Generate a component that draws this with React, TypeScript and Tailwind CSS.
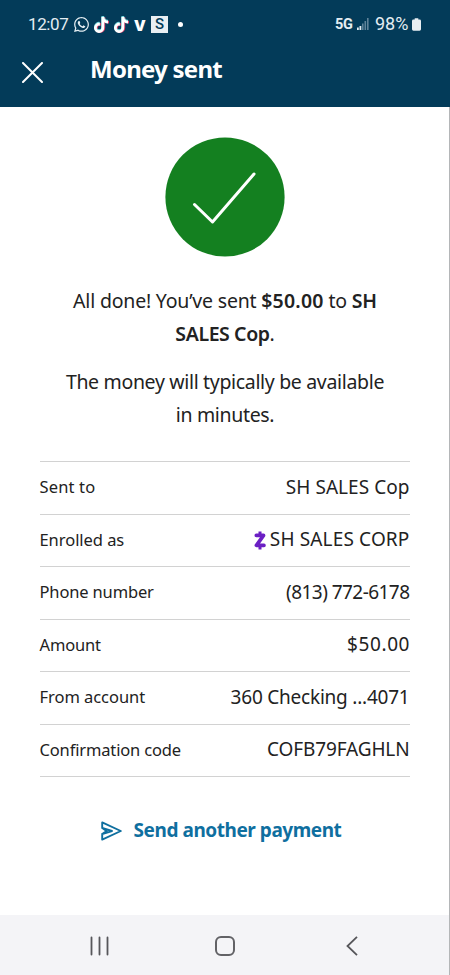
import React from "react";
import { FaWhatsapp } from "react-icons/fa";
import { FaTiktok } from "react-icons/fa6";

interface DetailRow {
  label: string;
  value: string;
  labelClass: string;
  valueClass: string;
  zelle?: boolean;
}

const details: DetailRow[] = [
  {
    label: "Sent to",
    value: "SH SALES Cop",
    labelClass: "tracking-[0.15px]",
    valueClass: "tracking-[0.05px]",
  },
  {
    label: "Enrolled as",
    value: "SH SALES CORP",
    labelClass: "tracking-[-0.05px]",
    valueClass: "tracking-[0.15px]",
    zelle: true,
  },
  {
    label: "Phone number",
    value: "(813) 772-6178",
    labelClass: "tracking-[-0.15px]",
    valueClass: "tracking-[-0.55px]",
  },
  {
    label: "Amount",
    value: "$50.00",
    labelClass: "tracking-[-0.15px]",
    valueClass: "tracking-[0.6px] -mr-[0.6px]",
  },
  {
    label: "From account",
    value: "360 Checking ...4071",
    labelClass: "tracking-[-0.05px]",
    valueClass: "tracking-[-0.22px]",
  },
  {
    label: "Confirmation code",
    value: "COFB79FAGHLN",
    labelClass: "tracking-[-0.15px]",
    valueClass: "tracking-[-0.12px]",
  },
];

const TikTokIcon: React.FC = () => (
  <span className="relative block h-4 w-[14px]">
    <FaTiktok className="absolute top-[0.7px] left-[0.7px] h-4 w-[14px] text-[#e8426b]" />
    <FaTiktok className="absolute top-[-0.5px] left-[-0.5px] h-4 w-[14px] text-[#6fd6dc]" />
    <FaTiktok className="absolute top-0 left-0 h-4 w-[14px] text-white" />
  </span>
);

const ZelleIcon: React.FC = () => (
  <svg className="h-[19px] w-3" viewBox="0 0 12 19" fill="none">
    <path d="M6 .6v3M6 15.4v3" stroke="#6b1fc4" strokeWidth="3" />
    <path
      d="M2.3 4.4h7.300L2.400 14.400h7.600"
      stroke="#6b1fc4"
      strokeWidth="3.6"
      strokeLinejoin="round"
      strokeLinecap="round"
    />
  </svg>
);

const StatusBar: React.FC = () => (
  <div className="flex h-12 items-center justify-between pr-[28px] pl-7 text-[#e4edf2]">
    <div className="flex items-center pt-px">
      <span className="w-[45px] font-['Roboto'] text-[17px] tracking-[-0.4px]">
        12:07
      </span>
      <FaWhatsapp className="mr-[4px] h-[17px] w-[17px]" />
      <TikTokIcon />
      <span className="w-[6px]" />
      <TikTokIcon />
      <span className="ml-[6px] w-3 font-['Inter'] text-[19px] leading-5 font-extrabold text-white">
        v
      </span>
      <span className="ml-[5px] flex h-[17px] w-[17px] items-center justify-center bg-[#e9eff3] font-['Roboto'] text-[15px] font-medium text-[#033b59]">
        S
      </span>
      <span className="ml-[10px] h-[5px] w-[5px] rounded-full bg-white" />
    </div>
    <div className="flex items-center">
      <span className="w-[19px] pt-[2px] font-['Roboto'] text-[14.5px] font-bold tracking-[-0.3px]">
        5G
      </span>
      <svg className="ml-[3px] h-3 w-3" viewBox="0 0 12 12">
        <path d="M0 9.5h1.800V12H0zM2.500 8h1.800v4H2.500z" fill="#e4edf2" />
        <path
          d="M5 5.500h1.600V12H5zM7.500 3h1.600v9H7.500zM10 0h1.600v12H10z"
          fill="#5f8399"
        />
      </svg>
      <span className="ml-[6px] w-[37px] pb-px font-['Roboto'] text-[18px]">
        98%
      </span>
      <svg className="mr-px h-[13px] w-[9px]" viewBox="0 0 10 14">
        <path
          d="M3 0h4v1.500h1.400A1.600 1.600 0 0 1 10 3.100v9.300A1.600 1.600 0 0 1 8.400 14H1.600A1.600 1.600 0 0 1 0 12.400V3.100A1.600 1.600 0 0 1 1.600 1.500H3z"
          fill="#e9eff3"
        />
      </svg>
    </div>
  </div>
);

const App: React.FC = () => {
  return (
    <div className="flex h-[975px] w-[450px] flex-col overflow-hidden bg-white font-['Noto_Sans',sans-serif] text-[#222222]">
      <header className="h-[107px] shrink-0 bg-[#033b59]">
        <StatusBar />
        <div className="flex h-[46px] items-center pl-[22px]">
          <svg
            className="mt-[2px] h-[21px] w-[21px]"
            viewBox="0 0 21 21"
            fill="none"
            stroke="#fff"
            strokeWidth="2"
            strokeLinecap="round"
          >
            <path d="M1 1l19 19M20 1L1 20" />
          </svg>
          <h1 className="mb-[4px] ml-[47px] text-[24px] leading-8 font-bold tracking-[-0.75px] whitespace-nowrap text-white">
            Money sent
          </h1>
        </div>
      </header>

      <main className="flex grow flex-col items-center border-r border-[#b4b6b8] pt-[30px]">
        <svg className="h-[120px] w-[120px]" viewBox="0 0 120 120" fill="none">
          <circle cx="60" cy="60" r="59.600" fill="#148020" />
          <path
            d="M29.500 67.500l18 17.500 41.500-48"
            stroke="#fff"
            strokeWidth="3"
            strokeLinecap="round"
            strokeLinejoin="round"
          />
        </svg>

        <div className="mt-[27px] pl-px text-center text-[19.5px] leading-[33px] whitespace-nowrap">
          <p className="tracking-[-0.2px]">
            All done! You’ve sent{" "}
            <b className="font-semibold tracking-[0.2px]">$50.00</b> to{" "}
            <b className="font-semibold">SH</b>
            <br />
            <b className="font-semibold tracking-[-0.4px]">SALES Cop</b>.
          </p>
          <p className="mt-[15px] tracking-[-0.33px]">
            The money will typically be available
            <br />
            in minutes.
          </p>
        </div>

        <dl className="mt-[30px] w-[370px] border-t border-[#d2d2d2]">
          {details.map((row) => (
            <div
              key={row.label}
              className="flex h-[52.5px] items-center justify-between border-b border-[#d2d2d2] whitespace-nowrap"
            >
              <dt className={`text-[16.5px] ${row.labelClass}`}>
                {row.label}
              </dt>
              <dd className="flex items-center gap-1 pb-[2px] text-[19px]">
                {row.zelle && (
                  <span className="pt-[3px]">
                    <ZelleIcon />
                  </span>
                )}
                <span className={row.valueClass}>{row.value}</span>
              </dd>
            </div>
          ))}
        </dl>

        <button className="mt-[37px] mr-[10px] flex items-center text-[#0f6f9f]">
          <svg
            className="mt-[2px] ml-[3px] h-5 w-[21px]"
            viewBox="0 0 21 20"
            fill="none"
            stroke="currentColor"
            strokeWidth="1.9"
            strokeLinejoin="round"
            strokeLinecap="round"
          >
            <path d="M1.200 1.400L19.800 10 1.200 18.600V13L11 10 1.200 7zM1.200 7L5.500 10 1.200 13" />
          </svg>
          <span className="ml-3 text-[19px] leading-8 font-bold tracking-[-0.45px] whitespace-nowrap">
            Send another payment
          </span>
        </button>
      </main>

      <nav className="flex h-[60px] shrink-0 items-center border-r border-[#b4b6b8] bg-[#f4f4f7] pt-px pl-[90px]">
        <svg
          className="h-5 w-[19px]"
          viewBox="0 0 19 20"
          stroke="#56565a"
          strokeWidth="1.8"
          strokeLinecap="round"
        >
          <path d="M1.500 1.500v17M9.500 1.500v17M17.500 1.500v17" />
        </svg>
        <span className="ml-[106px] h-5 w-5 rounded-[6px] border-2 border-[#626266]" />
        <svg
          className="ml-[111px] h-5 w-3"
          viewBox="0 0 12 20"
          fill="none"
          stroke="#56565a"
          strokeWidth="1.8"
        >
          <path d="M11 .8L1.500 10l9.500 9.200" />
        </svg>
      </nav>
    </div>
  );
};

export default App;
